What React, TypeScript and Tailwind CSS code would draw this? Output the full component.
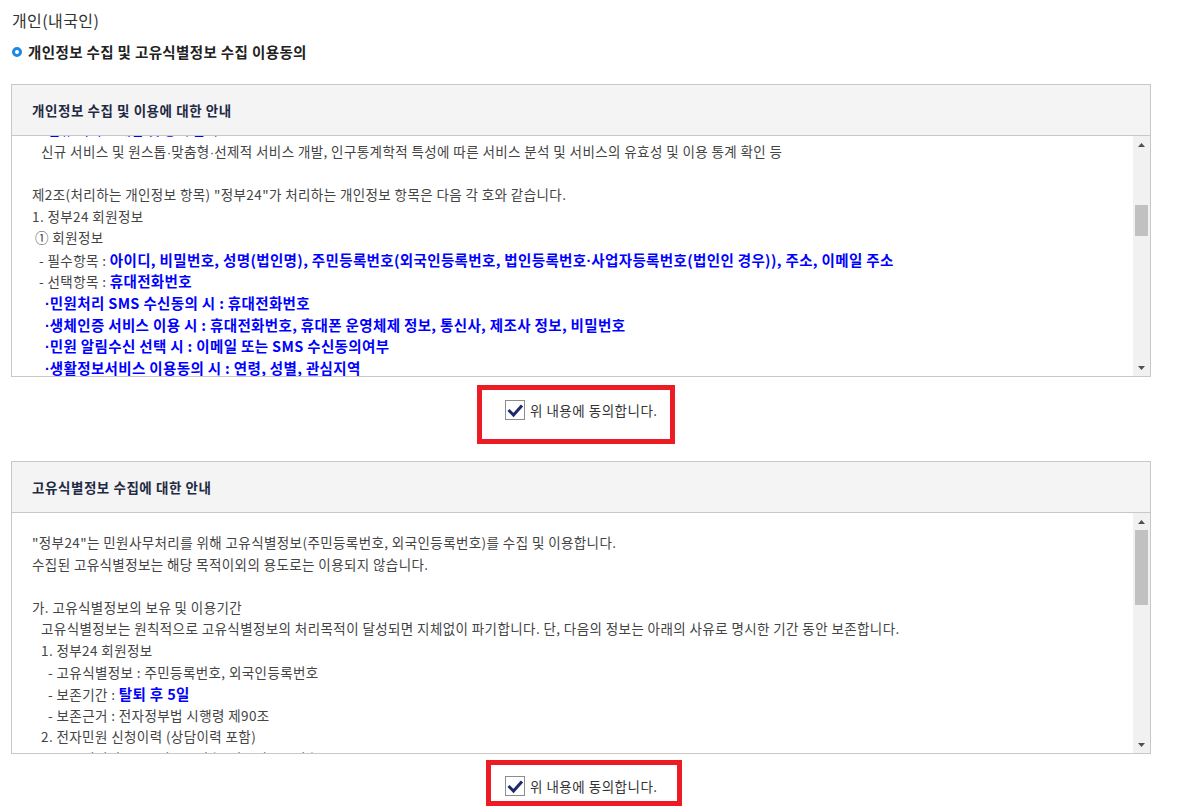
import { useLayoutEffect, useRef, type ReactNode, type RefObject } from "react";

function Arrow({ down }: { down?: boolean }) {
  return (
    <div className="flex h-[17px] items-center justify-center">
      <svg width="7" height="4" viewBox="0 0 7 4">
        {down ? <path d="M0 0H7L3.5 4Z" fill="#505050" /> : <path d="M3.5 0L7 4H0Z" fill="#505050" />}
      </svg>
    </div>
  );
}

function Scrollbar({ thumb }: { thumb: string }) {
  return (
    <div className="flex w-[17px] shrink-0 flex-col bg-[#f1f1f1]">
      <Arrow />
      <div className="flex-1 px-[2px]">
        <div className={`bg-[#c1c1c1] ${thumb}`} />
      </div>
      <Arrow down />
    </div>
  );
}

function Box({
  title,
  children,
  contentRef,
  thumb,
}: {
  title: string;
  children: ReactNode;
  contentRef?: RefObject<HTMLDivElement | null>;
  thumb: string;
}) {
  return (
    <div className="w-[1140px] border border-[#c8c8c8]">
      <div className="flex h-[51px] items-center border-b border-[#c8c8c8] bg-[#f4f4f4] pl-[20px] text-[13.5px] font-semibold tracking-[0.55px] text-[#1f2a44]">
        {title}
      </div>
      <div className="flex h-[240px]">
        <div
          ref={contentRef}
          className="relative flex-1 overflow-hidden pl-[20px] pt-[19px] text-[13.5px] leading-[21.6px] tracking-[0.4px] text-[#444]"
        >
          {children}
        </div>
        <Scrollbar thumb={thumb} />
      </div>
    </div>
  );
}

function L({ pl = "", children }: { pl?: string; children?: ReactNode }) {
  return <div className={`h-[21.6px] whitespace-nowrap ${pl}`}>{children}</div>;
}

function B({ children }: { children: ReactNode }) {
  return <span className="text-[14.5px] font-bold tracking-[0.35px] text-[#0000ff]">{children}</span>;
}

function D() {
  return <span className="font-['Liberation_Sans',sans-serif] tracking-normal">·</span>;
}

function Agree({ box, pad }: { box: string; pad: string }) {
  return (
    <div className={`border-[5px] border-[#ed1c24] ${box}`}>
      <div className={`flex items-center ${pad}`}>
        <div className="flex h-[20px] w-[20px] shrink-0 items-center justify-center border border-[#8c8c8c] bg-white">
          <svg width="18" height="18" viewBox="0 0 18 18">
            <path d="M2.5 9 L7.5 14 L16 4.5" fill="none" stroke="#1f2a6b" strokeWidth="3" />
          </svg>
        </div>
        <span className="ml-[5px] text-[13.5px] leading-[20px] tracking-[0.5px] text-[#333]">위 내용에 동의합니다.</span>
      </div>
    </div>
  );
}

export default function App() {
  const ref1 = useRef<HTMLDivElement | null>(null);
  const target = useRef<HTMLDivElement | null>(null);

  useLayoutEffect(() => {
    if (ref1.current && target.current) {
      ref1.current.scrollTop = target.current.offsetTop - 5;
    }
  }, []);

  return (
    <div className="min-h-[810px] bg-white pl-[11px] pt-[8px] font-['Noto_Sans_CJK_KR','Noto_Sans',sans-serif]">
      <div className="pl-[1px] text-[16px] leading-[24px] tracking-[0.4px] text-[#333]">개인(내국인)</div>
      <div className="mt-[10px] flex h-[20px] items-center">
        <span className="ml-[1px] h-[10px] w-[10px] rounded-full border-[3px] border-[#1e88e5] bg-white" />
        <span className="ml-[6px] text-[14.5px] font-semibold tracking-[0.37px] text-[#222]">
          개인정보 수집 및 고유식별정보 수집 이용동의
        </span>
      </div>

      <div className="mt-[22px]">
        <Box title="개인정보 수집 및 이용에 대한 안내" contentRef={ref1} thumb="mt-[52px] h-[31px]">
          <L>제1조(개인정보의 처리 목적) "정부24"는 다음의 목적을 위하여 개인정보를 처리합니다. 처리하고 있는 개인정보는 다음의 목적 이외의 용도로는 이용되지 않습니다.</L>
          <L><span className="text-[#0000ff]">1. 회원 가입 및 관리</span></L>
          <L pl="pl-[9px]">회원제 서비스 이용에 따른 본인확인, 개인식별, 가입의사 확인, 회원자격 유지<D />관리, 서비스 부정이용 방지 등</L>
          <L><span className="text-[#0000ff]">2. 민원사무 처리</span></L>
          <L pl="pl-[9px]">민원인의 신원 확인, 민원사항 확인, 사실조사를 위한 연락<D />통지, 처리결과 통보 등</L>
          <L><span className="text-[#0000ff]">3. 맞춤형 서비스 제공</span></L>
          <L pl="pl-[9px]">생활정보 알림, 맞춤형 서비스 안내 등</L>
          <L><span className="text-[#0000ff]">4. 신규 서비스 개발 및 통계 분석</span></L>
          <div ref={target} className="h-[21.6px] whitespace-nowrap pl-[9px]">
            신규 서비스 및 원스톱<D />맞춤형<D />선제적 서비스 개발, 인구통계학적 특성에 따른 서비스 분석 및 서비스의 유효성 및 이용 통계 확인 등
          </div>
          <L />
          <L>제2조(처리하는 개인정보 항목) "정부24"가 처리하는 개인정보 항목은 다음 각 호와 같습니다.</L>
          <L>1. 정부24 회원정보</L>
          <L pl="pl-[3px]">① 회원정보</L>
          <L pl="pl-[7px]">
            - 필수항목 : <B>아이디, 비밀번호, 성명(법인명), 주민등록번호(외국인등록번호, 법인등록번호<D />사업자등록번호(법인인 경우)), 주소, 이메일 주소</B>
          </L>
          <L pl="pl-[7px]">
            - 선택항목 : <B>휴대전화번호</B>
          </L>
          <L pl="pl-[13px]"><B><D />민원처리 SMS 수신동의 시 : 휴대전화번호</B></L>
          <L pl="pl-[13px]"><B><D />생체인증 서비스 이용 시 : 휴대전화번호, 휴대폰 운영체제 정보, 통신사, 제조사 정보, 비밀번호</B></L>
          <L pl="pl-[13px]"><B><D />민원 알림수신 선택 시 : 이메일 또는 SMS 수신동의여부</B></L>
          <L pl="pl-[13px]"><B><D />생활정보서비스 이용동의 시 : 연령, 성별, 관심지역</B></L>
          <L pl="pl-[3px]">② 법정대리인 정보</L>
          <L pl="pl-[7px]">- 필수항목 : 성명, 생년월일, 휴대전화번호</L>
          <L>2. 민원신청 정보</L>
          <L pl="pl-[7px]">- 필수항목 : 성명, 주민등록번호, 주소, 전화번호</L>
          <L />
        </Box>
      </div>

      <Agree box="mt-[8px] ml-[466px] h-[59px] w-[198px]" pad="pl-[23px] pt-[10px]" />

      <div className="mt-[17px]">
        <Box title="고유식별정보 수집에 대한 안내" thumb="mt-0 h-[75px]">
          <L>"정부24"는 민원사무처리를 위해 고유식별정보(주민등록번호, 외국인등록번호)를 수집 및 이용합니다.</L>
          <L>수집된 고유식별정보는 해당 목적이외의 용도로는 이용되지 않습니다.</L>
          <L />
          <L>가. 고유식별정보의 보유 및 이용기간</L>
          <L pl="pl-[9px]">고유식별정보는 원칙적으로 고유식별정보의 처리목적이 달성되면 지체없이 파기합니다. 단, 다음의 정보는 아래의 사유로 명시한 기간 동안 보존합니다.</L>
          <L pl="pl-[9px]">1. 정부24 회원정보</L>
          <L pl="pl-[16px]">- 고유식별정보 : 주민등록번호, 외국인등록번호</L>
          <L pl="pl-[16px]">
            - 보존기간 : <B>탈퇴 후 5일</B>
          </L>
          <L pl="pl-[16px]">- 보존근거 : 전자정부법 시행령 제90조</L>
          <L pl="pl-[9px]">2. 전자민원 신청이력 (상담이력 포함)</L>
          <L pl="pl-[16px]">- 고유식별정보 : 주민등록번호, 외국인등록번호</L>
          <L pl="pl-[16px]">- 보존기간 : 10년</L>
        </Box>
      </div>

      <Agree box="mt-[6px] ml-[475px] h-[46px] w-[196px]" pad="pl-[14px] pt-[11px]" />
    </div>
  );
}
